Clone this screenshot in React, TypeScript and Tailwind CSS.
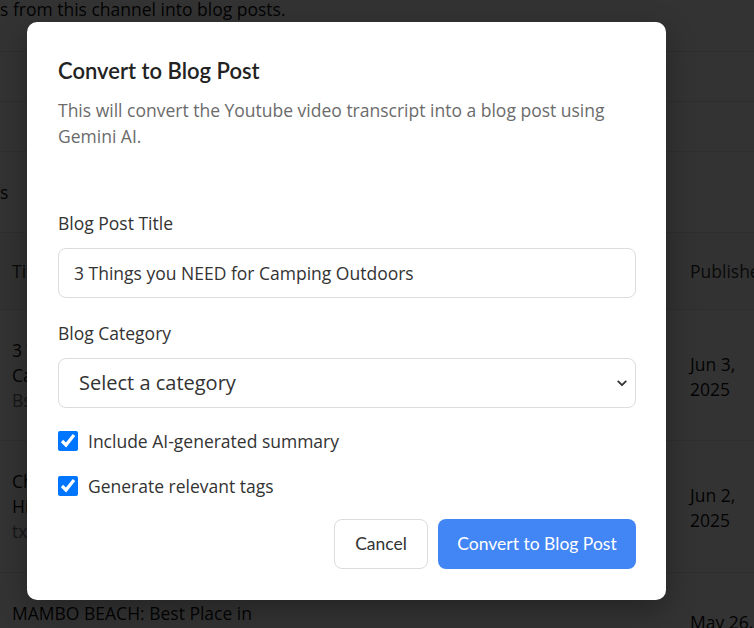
import { useState } from "react";

const rows = [
  {
    title: "3 Things you NEED for Camping Outdoors",
    sub: "Bs8xQk2LmPw",
    date: ["Jun 3,", "2025"],
    h: "h-[131px]",
  },
  {
    title: "Chasing Waterfalls on a Hidden Trail",
    sub: "txR9aPq4YvE",
    date: ["Jun 2,", "2025"],
    h: "h-[132px]",
  },
];

function Background() {
  return (
    <div className="min-h-[628px] bg-white font-['Open_Sans',sans-serif] text-[17.5px] text-[#111]">
      <p className="-mt-[3px] leading-[25px]">s from this channel into blog posts.</p>
      <div className="mt-[29px] border-b border-[#e5e7eb]" />
      <div className="h-[50px] border-b border-[#e5e7eb]" />
      <div className="h-[50px] border-b border-[#e5e7eb]" />
      <div className="flex h-[81px] items-center border-b border-[#e5e7eb]">s</div>
      <div className="flex h-[77px] items-center justify-between border-b border-[#e5e7eb] bg-[#f9fafb] pl-3 text-[#333]">
        <span>Title</span>
        <span className="w-[64px] overflow-hidden whitespace-nowrap">Published</span>
      </div>
      {rows.map((r) => (
        <div key={r.title} className={`flex ${r.h} items-center justify-between border-b border-[#e5e7eb] pl-3`}>
          <div className="w-[240px] leading-[25px]">
            <div>{r.title}</div>
            <div className="text-[#777]">{r.sub}</div>
          </div>
          <div className="mt-[3px] w-[64px] leading-[25px]">
            <div>{r.date[0]}</div>
            <div>{r.date[1]}</div>
          </div>
        </div>
      ))}
      <div className="flex justify-between pl-3 pt-[28px] leading-[25px]">
        <span>MAMBO BEACH: Best Place in</span>
        <span className="mt-[9px] w-[64px] whitespace-nowrap">May 26,</span>
      </div>
    </div>
  );
}

function Check({ label }: { label: string }) {
  const [on, setOn] = useState(true);
  return (
    <label className="flex h-6 items-center gap-[10px] text-[17.5px] text-[#333]">
      <input
        type="checkbox"
        checked={on}
        onChange={() => setOn(!on)}
        className="m-0 h-5 w-5 accent-[#0075ff]"
      />
      {label}
    </label>
  );
}

export default function App() {
  return (
    <div className="relative h-[628px] w-[754px] overflow-hidden">
      <Background />
      <div className="absolute inset-0 bg-black/80" />

      <div className="absolute left-[27px] top-[22px] w-[639px] rounded-[10px] bg-white pb-[31px] pl-[31px] pr-[30px] pt-[35px] shadow-[0_10px_30px_rgba(0,0,0,0.3)] font-['Open_Sans',sans-serif]">
        <h2 className="font-['Lato',sans-serif] text-[22px] font-semibold leading-7 text-[#222]">
          Convert to Blog Post
        </h2>
        <p className="mt-3 text-[17.5px] leading-[26px] text-[#6b6b6b]">
          This will convert the Youtube video transcript into a blog post using Gemini AI.
        </p>

        <label className="mt-[62px] block text-[17.5px] leading-6 text-[#333]">Blog Post Title</label>
        <input
          defaultValue="3 Things you NEED for Camping Outdoors"
          className="mt-[13px] block h-[50px] w-full rounded-lg border border-[#dcdcdc] px-[15px] text-[17.5px] text-[#333] outline-none"
        />

        <label className="mt-[23px] block text-[17.5px] leading-6 text-[#333]">Blog Category</label>
        <div className="relative mt-[13px]">
          <select className="block h-[50px] w-full appearance-none rounded-lg border border-[#dcdcdc] bg-white px-5 text-[20px] text-[#333] outline-none">
            <option>Select a category</option>
            <option>Travel</option>
            <option>Outdoors</option>
          </select>
          <svg
            viewBox="0 0 12 8"
            className="pointer-events-none absolute right-[9px] top-[22px] h-[7px] w-[10px]"
            fill="none"
            stroke="#333"
            strokeWidth="2.2"
            strokeLinecap="round"
            strokeLinejoin="round"
          >
            <path d="M1.5 1.5 6 6l4.5-4.5" />
          </svg>
        </div>

        <div className="mt-[21px] flex flex-col gap-[21px]">
          <Check label="Include AI-generated summary" />
          <Check label="Generate relevant tags" />
        </div>

        <div className="mt-[21px] flex justify-end gap-[10px] font-['Lato',sans-serif] text-[17.5px]">
          <button className="h-[50px] w-[94px] rounded-lg border border-[#dcdcdc] bg-white text-[#333]">
            Cancel
          </button>
          <button className="h-[50px] w-[198px] rounded-lg bg-[#4285f4] text-white">
            Convert to Blog Post
          </button>
        </div>
      </div>
    </div>
  );
}
